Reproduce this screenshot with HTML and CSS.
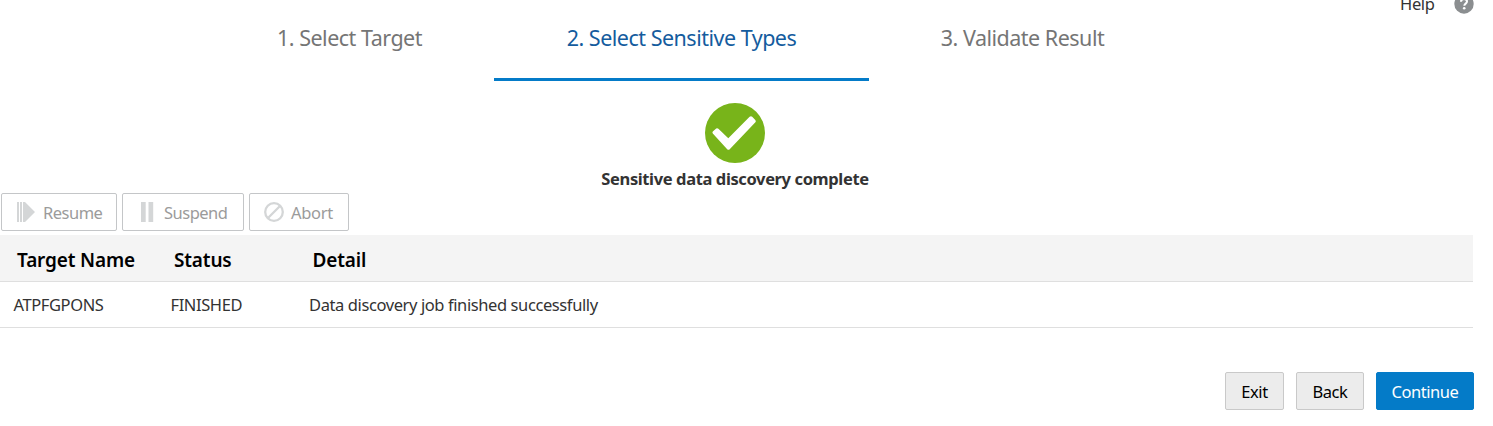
FILE: index.html
```html
<!DOCTYPE html>
<html lang="en">
<head>
<meta charset="utf-8">
<title>Sensitive Data Discovery</title>
<link rel="stylesheet" href="styles.css">
</head>
<body>
<header class="top">
  <nav class="steps">
    <a class="step step-target"><span>1. Select Target</span></a>
    <a class="step step-types active"><span>2. Select Sensitive Types</span></a>
    <a class="step step-validate"><span>3. Validate Result</span></a>
  </nav>
  <div class="help">
    <span class="help-label">Help</span>
    <svg class="help-icon" width="20" height="20" viewBox="0 0 20 20"><circle cx="10" cy="10" r="9.7" fill="#8b8e90"/><path d="M7 7.8C7 5.8 8.3 5 10 5s3 .9 3 2.5c0 2-2.7 2.2-2.7 4.2" fill="none" stroke="#fff" stroke-width="2"/><circle cx="10.2" cy="14.3" r="1.3" fill="#fff"/></svg>
  </div>
</header>
<section class="result">
  <svg width="60" height="60" viewBox="0 0 60 60"><circle cx="30" cy="30" r="30" fill="#78b41a"/><path d="M7.8 30.6Q7 29.5 7.8 28.6L11.2 25.6Q12.3 24.9 13.4 25.8L23.3 35.2 44.6 13.8Q46 12.7 47.2 13.8L50.3 16.9Q51.4 18 50.4 19.3L24.7 46.2Q23.5 47.4 22.2 46.2Z" fill="#fff"/></svg>
  <strong class="message"><span>Sensitive data discovery complete</span></strong>
</section>
<div class="toolbar">
  <button class="tool resume" disabled><svg width="20" height="20" viewBox="0 0 20 20"><path d="M1 0h2v20H1zM4 0h2v20H4zM7 0h2l10 10L9 20H7z" fill="#d4d6d7"/></svg><span>Resume</span></button>
  <button class="tool suspend" disabled><svg width="20" height="20" viewBox="0 0 20 20"><path d="M4 0h4.7v20H4zM11.5 0h4.7v20h-4.7z" fill="#d4d6d7"/></svg><span>Suspend</span></button>
  <button class="tool abort" disabled><svg width="20" height="20" viewBox="0 0 20 20"><circle cx="10" cy="10" r="8.8" fill="none" stroke="#d4d6d7" stroke-width="2.3"/><path d="M16 4L4 16" stroke="#d4d6d7" stroke-width="2.3"/></svg><span>Abort</span></button>
</div>
<div class="table">
  <div class="row head"><span class="c1">Target Name</span><span class="c2">Status</span><span class="c3">Detail</span></div>
  <div class="row data"><span class="c1">ATPFGPONS</span><span class="c2">FINISHED</span><span class="c3">Data discovery job finished successfully</span></div>
</div>
<footer class="actions">
  <button class="btn exit">Exit</button>
  <button class="btn back">Back</button>
  <button class="btn primary">Continue</button>
</footer>
</body>
</html>
```
FILE: styles.css
```css
* { box-sizing: border-box; }
body {
  margin: 0;
  height: 426px;
  overflow: hidden;
  background: #fff;
  color: #333;
  font: 16.5px/22px "Segoe UI", "Noto Sans", sans-serif;
}
button { font: inherit; padding: 0; margin: 0; white-space: nowrap; }
.top { display: flex; justify-content: space-between; height: 81px; padding-left: 205px; }
.steps { display: flex; }
.step {
  display: flex;
  justify-content: center;
  height: 81px;
  padding-top: 23px;
  border-bottom: 3px solid transparent;
  color: #757575;
  font-size: 21.5px;
  line-height: 30px;
  letter-spacing: -.5px;
  white-space: nowrap;
}
.step-target { width: 289px; }
.step-types { width: 375px; }
.step-validate { width: 307px; }
.active { color: #145c9e; border-color: #047bc8; }
.help { display: flex; width: 93px; gap: 19px; margin-top: -6px; }
.help-label { width: 35px; margin-top: -1px; letter-spacing: -.35px; }
.help-icon { flex: none; }
.result { display: flex; flex-direction: column; align-items: center; width: 1470px; padding-top: 22px; }
.message { margin-top: 5px; font-weight: 700; letter-spacing: -.38px; }
.toolbar { display: flex; gap: 5px; padding: 3px 0 4px 1px; }
.tool {
  display: flex;
  align-items: center;
  gap: 7px;
  height: 38px;
  padding: 0 0 0 14px;
  border: 1px solid #c4c6c8;
  border-radius: 2px;
  background: #fff;
  color: #9b9b9b;
  letter-spacing: -.5px;
}
.tool span { padding-top: 2px; }
.resume { width: 116px; }
.suspend { width: 122px; }
.abort { width: 100px; }
.abort span { letter-spacing: -.3px; }
.table { width: 1473px; }
.row { display: grid; grid-template-columns: 157px 138.5px 1fr; align-items: center; border-bottom: 1px solid #dfdfdf; }
.head { height: 47px; padding: 3px 0 0 17px; background: #f4f4f4; color: #000; font-size: 19px; font-weight: 600; letter-spacing: -.15px; }
.data { height: 46px; padding: 1px 0 0 13.5px; letter-spacing: -.4px; }
.actions { display: flex; justify-content: flex-end; gap: 12px; padding: 44px 19px 0 0; }
.btn { height: 38px; padding-top: 1px; border: 1px solid #c9c9c9; border-radius: 2px; background: #ececec; color: #000; letter-spacing: -.45px; }
.exit { width: 59px; }
.back { width: 68px; }
.primary { width: 98px; border-color: #047bc8; background: #047bc8; color: #fff; }
```
